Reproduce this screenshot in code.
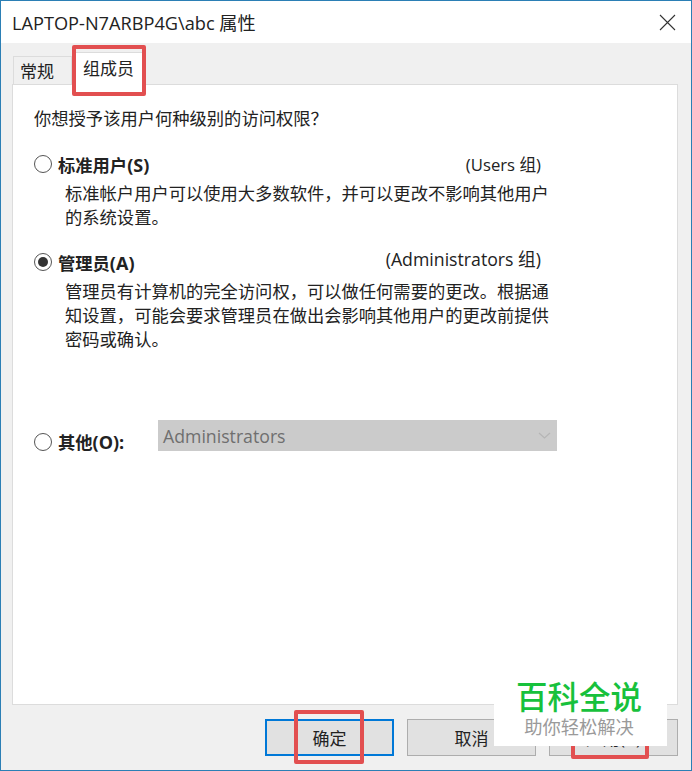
<div class="win">
  <header class="title">
    <span>LAPTOP-N7ARBP4G\abc 属性</span>
    <svg class="close" width="17" height="17" viewBox="0 0 17 17" aria-hidden="true"><path d="M1 1 16 16M16 1 1 16" stroke="#333" stroke-width="1.1" fill="none"/></svg>
  </header>

  <div class="content">
    <div class="tabs">
      <div class="tab">常规</div>
      <div class="tab active">组成员</div>
    </div>
    <div class="pane">
      <p class="q">你想授予该用户何种级别的访问权限&#65311;</p>

      <section class="opt first">
        <div class="row">
          <span class="radio"></span>
          <b>标准用户<span class="l">(S)</span></b>
          <span class="grp">(Users 组)</span>
        </div>
        <p class="desc">标准帐户用户可以使用大多数软件&#65292;并可以更改不影响其他用户<br/>的系统设置。</p>
      </section>

      <section class="opt second">
        <div class="row">
          <span class="radio on"></span>
          <b>管理员<span class="l">(A)</span></b>
          <span class="grp up">(Administrators 组)</span>
        </div>
        <p class="desc">管理员有计算机的完全访问权&#65292;可以做任何需要的更改。根据通<br/>知设置&#65292;可能会要求管理员在做出会影响其他用户的更改前提供<br/>密码或确认。</p>
      </section>

      <div class="other">
        <span class="radio"></span>
        <b>其他<span class="l">(O):</span></b>
        <div class="select">
          <span>Administrators</span>
          <svg width="13" height="7" viewBox="0 0 13 7" aria-hidden="true"><path d="M1 1l5.5 5L12 1" stroke="#b5b5b5" stroke-width="1.2" fill="none"/></svg>
        </div>
      </div>
    </div>

    <footer class="btns">
      <button class="btn primary">确定</button>
      <button class="btn">取消</button>
      <button class="btn">应用(A)</button>
    </footer>
  </div>

  <div class="mark m1"></div>
  <div class="mark m2"></div>
  <div class="mark m3"></div>

  <div class="wm">
    <div class="wm1">百科全说</div>
    <div class="wm2">助你轻松解决</div>
  </div>
</div>

<style>
  :global(body) { margin: 0; background: #fff; }
  .win {
    position: relative;
    box-sizing: border-box;
    width: 692px;
    height: 771px;
    border: 1px solid #2b7fb5;
    background: #f0f0f0;
    font-family: "Open Sans", "Noto Sans CJK SC", sans-serif;
    color: #222;
    overflow: hidden;
  }
  .title {
    height: 42px;
    background: #fff;
    display: flex;
    align-items: center;
    justify-content: space-between;
    padding: 0 15px 0 11px;
    font-size: 18.2px;
    color: #222;
  }
  .close { flex: none; }
  .content { padding: 0 13px 0 11px; }
  .tabs { display: flex; height: 41px; align-items: flex-end; }
  .tab {
    box-sizing: border-box;
    height: 28px;
    width: 59px;
    margin-left: 1px;
    padding-left: 6px;
    border: 1px solid #dcdcdc;
    border-bottom: none;
    background: #f0f0f0;
    font-size: 17px;
    line-height: 29px;
  }
  .tab.active {
    background: #fff;
    height: 33px;
    width: 73px;
    margin: 0 0 -1px;
    padding-left: 11px;
    border-left: none;
    line-height: 31px;
    position: relative;
    z-index: 1;
  }
  .pane {
    box-sizing: border-box;
    height: 621px;
    background: #fff;
    border: 1px solid #dcdcdc;
    padding: 21px 0 0 21px;
    font-size: 17.3px;
  }
  p { margin: 0; }
  .q { line-height: 25px; }
  .row { display: flex; align-items: center; height: 26px; width: 507px; }
  .radio {
    box-sizing: border-box;
    flex: none;
    width: 18px;
    height: 18px;
    border: 1px solid #555;
    border-radius: 50%;
    background: #fff;
    margin-right: 6px;
    position: relative;
  }
  .radio.on::after {
    content: "";
    position: absolute;
    inset: 3px;
    border-radius: 50%;
    background: #333;
  }
  b { font-weight: 700; }
  .l { font-size: 18px; }
  .grp { margin-left: auto; font-size: 16.7px; }
  .grp.up { position: relative; top: -4px; font-size: 17.7px; }
  .opt.first { margin-top: 20px; }
  .opt.second { margin-top: 19px; }
  .desc { margin: 5px 0 0 31px; line-height: 24px; }
  .other { display: flex; align-items: center; margin-top: 77px; }
  .other b { width: 100px; }
  .select {
    box-sizing: border-box;
    width: 399px;
    height: 31px;
    margin-top: -12px;
    background: #cbcbcb;
    color: #6f6f6f;
    display: flex;
    align-items: center;
    justify-content: space-between;
    padding: 0 6px 0 5px;
    font-size: 17.7px;
  }
  .btns { display: flex; gap: 13px; padding: 14px 0 0 253px; }
  .btn {
    box-sizing: border-box;
    width: 130px;
    height: 37px;
    border: 1px solid #adadad;
    background: #e1e1e1;
    font: inherit;
    font-size: 17px;
    color: #222;
    padding: 0;
  }
  .btn.primary { border: 2px solid #0078d7; }
  .mark {
    position: absolute;
    box-sizing: border-box;
    border: 4px solid #e24f50;
    border-radius: 2px;
    z-index: 2;
  }
  .m1 { left: 71px; top: 44px; width: 74px; height: 51px; }
  .m2 { left: 293px; top: 709px; width: 70px; height: 54px; }
  .m3 { left: 570px; top: 700px; width: 78px; height: 58px; }
  .wm {
    position: absolute;
    z-index: 3;
    left: 493px;
    top: 675px;
    box-sizing: border-box;
    width: 173px;
    height: 70px;
    padding-right: 3px;
    background: #fff;
    text-align: center;
  }
  .wm1 { font-size: 31.5px; font-weight: 500; color: #17c13c; line-height: 40px; margin-top: 1px; }
  .wm2 { font-size: 18.3px; color: #9a9a9a; line-height: 24px; margin-top: -2px; }
</style>
